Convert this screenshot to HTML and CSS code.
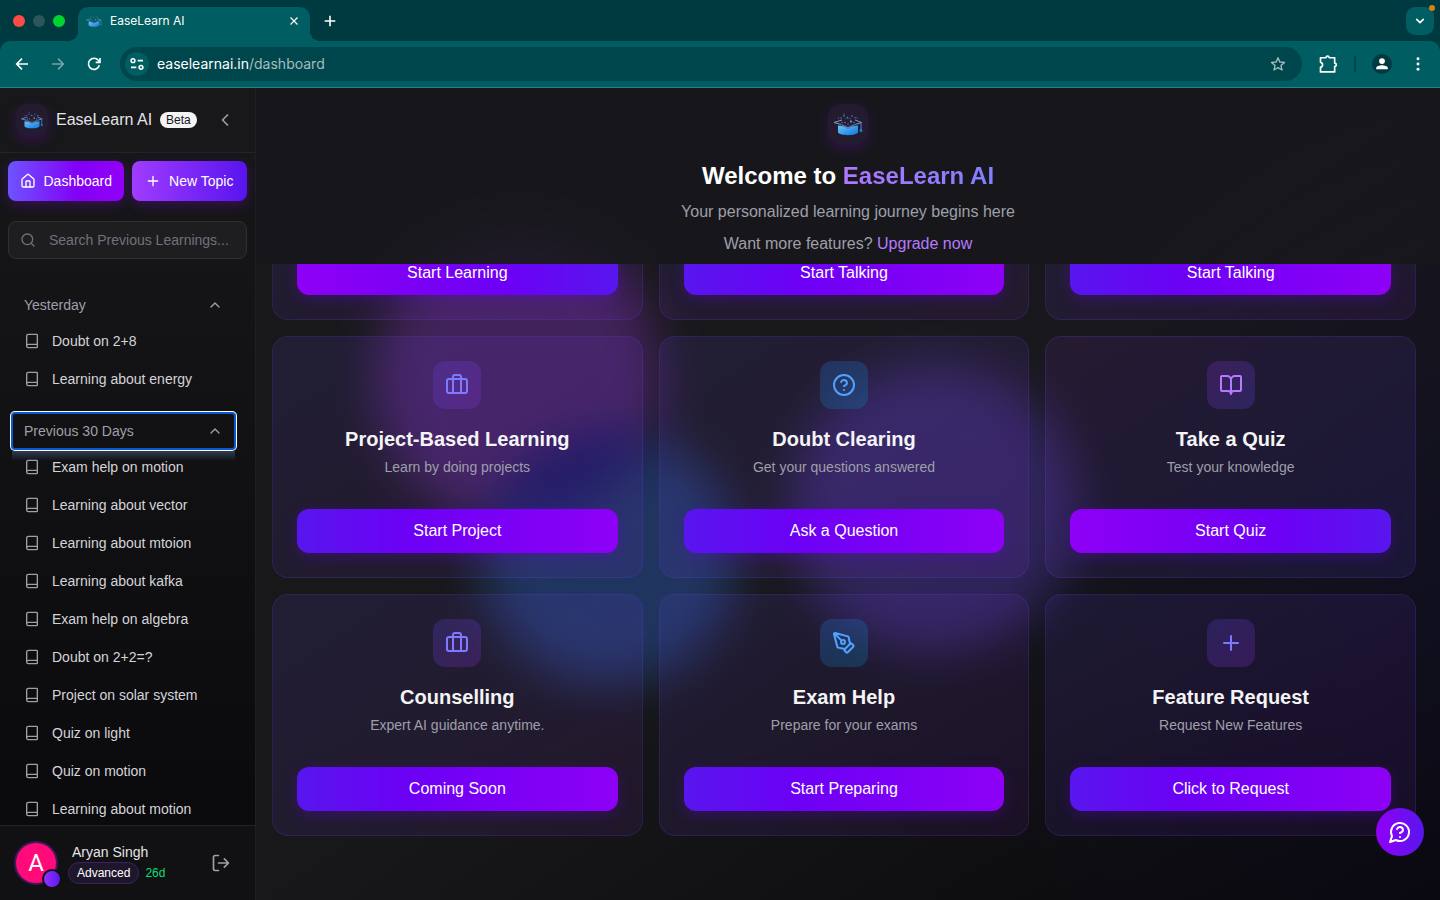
FILE: index.html
```html
<!DOCTYPE html>
<html lang="en">
<head>
  <meta charset="UTF-8" />
  <meta name="viewport" content="width=device-width, initial-scale=1.0"/>
  <title>EaseLearn AI</title>
  <link rel="stylesheet" href="styles.css">
</head>
<body>

<svg class="sprite" aria-hidden="true">
  <defs>
    <linearGradient id="capFill" x1="0" y1="0" x2="1" y2="1">
      <stop offset="0" stop-color="#6cc4ff"/>
      <stop offset="1" stop-color="#0b76d8"/>
    </linearGradient>
  </defs>
  <symbol id="logo" viewBox="0 0 30 24">
    <path d="M5 13.500c3 0 7 1 10 3 3-2 7-3 10-3v7c-2 3.500-18 3.500-20 0z" fill="url(#capFill)"/>
    <path d="M9 8 1 10.500l7 2 7 3.500 7-3.500 6.500-2L22 8" fill="none" stroke="#7f9fd0" stroke-width="1"/>
    <path d="M6 11.500 15 14.500l9-3M12 7q3-2 6 0" fill="none" stroke="#3d4f80" stroke-width=".8"/>
    <path d="M28 10.500v6" stroke="#3f8fe0" stroke-width="1"/>
    <path d="M27.200 16.500h1.600l.7 3.300h-3z" fill="#1d86e0"/>
    <g fill="#6485bb">
      <circle cx="11" cy="4" r=".8"/><circle cx="18" cy="9.500" r="1.200"/><circle cx="19" cy="4" r=".8"/>
      <circle cx="8" cy="6" r=".7"/><circle cx="14.500" cy="5.500" r=".7"/><circle cx="22" cy="5.800" r=".7"/>
      <circle cx="12" cy="10.500" r=".8"/><circle cx="11" cy="2" r=".6"/><circle cx="5.500" cy="6" r=".6"/>
      <circle cx="21" cy="10.500" r=".7"/><circle cx="9" cy="10.500" r=".7"/><circle cx="24" cy="6" r=".6"/>
      <circle cx="15" cy="12" r=".7"/>
    </g>
  </symbol>
  <symbol id="briefcase" viewBox="0 0 24 24"><path d="M16 20V4a2 2 0 0 0-2-2h-4a2 2 0 0 0-2 2v16"/><rect width="20" height="14" x="2" y="6" rx="2"/></symbol>
  <symbol id="help" viewBox="0 0 24 24"><circle cx="12" cy="12" r="10"/><path d="M9.090 9a3 3 0 0 1 5.830 1c0 2-3 3-3 3M12 17h.01"/></symbol>
  <symbol id="book-open" viewBox="0 0 24 24"><path d="M12 7v14M3 18a1 1 0 0 1-1-1V4a1 1 0 0 1 1-1h5a4 4 0 0 1 4 4 4 4 0 0 1 4-4h5a1 1 0 0 1 1 1v13a1 1 0 0 1-1 1h-6a3 3 0 0 0-3 3 3 3 0 0 0-3-3z"/></symbol>
  <symbol id="pen" viewBox="0 0 24 24"><path d="M15.707 21.293a1 1 0 0 1-1.414 0l-1.586-1.586a1 1 0 0 1 0-1.414l5.586-5.586a1 1 0 0 1 1.414 0l1.586 1.586a1 1 0 0 1 0 1.414z"/><path d="m18 13-1.375-6.874a1 1 0 0 0-.746-.776L3.235 2.028a1 1 0 0 0-1.207 1.207L5.350 15.879a1 1 0 0 0 .776.746L13 18M2.300 2.300l7.286 7.286"/><circle cx="11" cy="11" r="2"/></symbol>
  <symbol id="plus" viewBox="0 0 24 24"><path d="M5 12h14M12 5v14"/></symbol>
  <symbol id="book" viewBox="0 0 24 24"><path d="M4 19.500v-15A2.500 2.500 0 0 1 6.500 2H19a1 1 0 0 1 1 1v18a1 1 0 0 1-1 1H6.500a1 1 0 0 1 0-5H20"/></symbol>
  <symbol id="house" viewBox="0 0 24 24"><path d="M15 21v-8a1 1 0 0 0-1-1h-4a1 1 0 0 0-1 1v8"/><path d="M3 10a2 2 0 0 1 .709-1.528l7-5.999a2 2 0 0 1 2.582 0l7 5.999A2 2 0 0 1 21 10v9a2 2 0 0 1-2 2H5a2 2 0 0 1-2-2z"/></symbol>
  <symbol id="search" viewBox="0 0 24 24"><circle cx="11" cy="11" r="8"/><path d="m21 21-4.300-4.300"/></symbol>
  <symbol id="chevron-up" viewBox="0 0 24 24"><path d="m18 15-6-6-6 6"/></symbol>
  <symbol id="chevron-left" viewBox="0 0 24 24"><path d="m15 18-6-6 6-6"/></symbol>
  <symbol id="chevron-down" viewBox="0 0 24 24"><path d="m4 8 8 8 8-8"/></symbol>
  <symbol id="logout" viewBox="0 0 24 24"><path d="M9 21H5a2 2 0 0 1-2-2V5a2 2 0 0 1 2-2h4M16 17l5-5-5-5M21 12H9"/></symbol>
  <symbol id="chat" viewBox="0 0 24 24"><path d="M7.900 20A9 9 0 1 0 4 16.100L2 22ZM9.090 9a3 3 0 0 1 5.830 1c0 2-3 3-3 3M12 17h.01"/></symbol>
  <symbol id="close" viewBox="0 0 24 24"><path d="M5 5l14 14M19 5 5 19"/></symbol>
  <symbol id="new" viewBox="0 0 24 24"><path d="M4 12h16M12 4v16"/></symbol>
  <symbol id="arrow-left" viewBox="0 0 24 24"><path d="M21 12H4M12 4l-8 8 8 8"/></symbol>
  <symbol id="arrow-right" viewBox="0 0 24 24"><path d="M3 12h17M12 4l8 8-8 8"/></symbol>
  <symbol id="reload" viewBox="0 0 24 24"><path d="M20 14a8.300 8.300 0 1 1-1.500-7.500L21 9M21 3v6.500h-6.500"/></symbol>
  <symbol id="tune" viewBox="0 0 24 24"><circle cx="6" cy="7" r="2.800"/><path d="M13 7h8M3 17h8"/><circle cx="18" cy="17" r="2.800"/></symbol>
  <symbol id="star" viewBox="0 0 24 24"><path d="m12 2.500 2.700 6.500 7 .6-5.300 4.600 1.600 6.800-6-3.600L6 21l1.600-6.800L2.300 9.600l7-.6z"/></symbol>
  <symbol id="puzzle" viewBox="0 0 24 24"><path d="M3 4.500h6.500q.3-2 2-2t2 2H20v6.500q2 .3 2 2t-2 2v6.500H3v-5.500q2.500-.5 2.500-3t-2.500-3z"/></symbol>
  <symbol id="person" viewBox="0 0 24 24"><circle cx="12" cy="7" r="5"/><path d="M2 21v-2c0-3.500 6-5 10-5s10 1.500 10 5v2z"/></symbol>
  <symbol id="dots" viewBox="0 0 24 24"><circle cx="12" cy="4" r="2.200"/><circle cx="12" cy="12" r="2.200"/><circle cx="12" cy="20" r="2.200"/></symbol>
</svg>

<header class="browser">
  <div class="tab-strip">
    <div class="lights"><span class="light red"></span><span class="light gray"></span><span class="light green"></span></div>
    <div class="tab">
      <svg class="tab-logo"><use href="#logo"/></svg>
      <span class="tab-title">EaseLearn AI</span>
      <button class="plain" aria-label="Close tab"><svg class="icon s12 bold"><use href="#close"/></svg></button>
    </div>
    <button class="plain new-tab" aria-label="New tab"><svg class="icon s16 bold"><use href="#new"/></svg></button>
    <button class="tab-search" aria-label="Search tabs"><svg class="icon s10"><use href="#chevron-down"/></svg></button>
  </div>
  <div class="toolbar">
    <div class="nav-buttons">
      <button class="plain" aria-label="Back"><svg class="icon s16 bold"><use href="#arrow-left"/></svg></button>
      <button class="plain dim" aria-label="Forward"><svg class="icon s16 bold"><use href="#arrow-right"/></svg></button>
      <button class="plain" aria-label="Reload"><svg class="icon s16 bold"><use href="#reload"/></svg></button>
    </div>
    <div class="omnibox">
      <span class="site-info"><svg class="icon s16 bold"><use href="#tune"/></svg></span>
      <span class="url">easelearnai.in<span class="path">/dashboard</span></span>
      <button class="plain star" aria-label="Bookmark"><svg class="icon s16"><use href="#star"/></svg></button>
    </div>
    <div class="tools">
      <button class="plain" aria-label="Extensions"><svg class="icon s20"><use href="#puzzle"/></svg></button>
      <span class="tool-line"></span>
      <button class="profile" aria-label="Profile"><svg class="icon s16 solid"><use href="#person"/></svg></button>
      <button class="plain" aria-label="Menu"><svg class="icon s16 solid"><use href="#dots"/></svg></button>
    </div>
  </div>
</header>

<div class="app">
  <aside class="sidebar">
    <div class="brand">
      <span class="brand-logo"><svg><use href="#logo"/></svg></span>
      <span class="brand-name">EaseLearn AI</span>
      <span class="beta">Beta</span>
      <button class="plain collapse" aria-label="Collapse sidebar"><svg class="icon s20"><use href="#chevron-left"/></svg></button>
    </div>
    <div class="actions">
      <button class="action dashboard"><svg class="icon s16"><use href="#house"/></svg>Dashboard</button>
      <button class="action new-topic"><svg class="icon s16"><use href="#plus"/></svg>New Topic</button>
    </div>
    <label class="search">
      <svg class="icon s16"><use href="#search"/></svg>
      <input type="text" placeholder="Search Previous Learnings..." aria-label="Search Previous Learnings">
    </label>
    <nav class="history">
      <section class="group">
        <button class="group-title">Yesterday<svg class="icon s16"><use href="#chevron-up"/></svg></button>
        <ul>
          <li><a href="#"><svg class="icon s16"><use href="#book"/></svg>Doubt on 2+8</a></li>
          <li><a href="#"><svg class="icon s16"><use href="#book"/></svg>Learning about energy</a></li>
        </ul>
      </section>
      <section class="group">
        <button class="group-title focused">Previous 30 Days<svg class="icon s16"><use href="#chevron-up"/></svg></button>
        <ul>
          <li><a href="#"><svg class="icon s16"><use href="#book"/></svg>Exam help on motion</a></li>
          <li><a href="#"><svg class="icon s16"><use href="#book"/></svg>Learning about vector</a></li>
          <li><a href="#"><svg class="icon s16"><use href="#book"/></svg>Learning about mtoion</a></li>
          <li><a href="#"><svg class="icon s16"><use href="#book"/></svg>Learning about kafka</a></li>
          <li><a href="#"><svg class="icon s16"><use href="#book"/></svg>Exam help on algebra</a></li>
          <li><a href="#"><svg class="icon s16"><use href="#book"/></svg>Doubt on 2+2=?</a></li>
          <li><a href="#"><svg class="icon s16"><use href="#book"/></svg>Project on solar system</a></li>
          <li><a href="#"><svg class="icon s16"><use href="#book"/></svg>Quiz on light</a></li>
          <li><a href="#"><svg class="icon s16"><use href="#book"/></svg>Quiz on motion</a></li>
          <li><a href="#"><svg class="icon s16"><use href="#book"/></svg>Learning about motion</a></li>
        </ul>
      </section>
    </nav>
    <div class="user">
      <span class="avatar">A<span class="avatar-dot"></span></span>
      <div class="user-info">
        <div class="user-name">Aryan Singh</div>
        <div class="plan-row"><span class="plan">Advanced</span><span class="days">26d</span></div>
      </div>
      <button class="plain logout" aria-label="Log out"><svg class="icon s20"><use href="#logout"/></svg></button>
    </div>
  </aside>

  <main class="main">
    <div class="blobs">
      <span class="blob purple"></span>
      <span class="blob indigo"></span>
      <span class="blob blue"></span>
    </div>
    <div class="welcome">
      <span class="welcome-logo"><svg><use href="#logo"/></svg></span>
      <h1>Welcome to <span class="grad-text">EaseLearn AI</span></h1>
      <p>Your personalized learning journey begins here</p>
      <p>Want more features? <a href="#">Upgrade now</a></p>
    </div>
    <div class="scroller">
      <div class="cards">
        <article class="card">
          <button class="cta reverse">Start Learning</button>
        </article>
        <article class="card">
          <button class="cta">Start Talking</button>
        </article>
        <article class="card">
          <button class="cta">Start Talking</button>
        </article>
        <article class="card">
          <span class="card-icon indigo"><svg class="icon s24"><use href="#briefcase"/></svg></span>
          <h2>Project-Based Learning</h2>
          <p>Learn by doing projects</p>
          <button class="cta">Start Project</button>
        </article>
        <article class="card">
          <span class="card-icon blue"><svg class="icon s24"><use href="#help"/></svg></span>
          <h2>Doubt Clearing</h2>
          <p>Get your questions answered</p>
          <button class="cta">Ask a Question</button>
        </article>
        <article class="card alt">
          <span class="card-icon violet"><svg class="icon s24"><use href="#book-open"/></svg></span>
          <h2>Take a Quiz</h2>
          <p>Test your knowledge</p>
          <button class="cta reverse">Start Quiz</button>
        </article>
        <article class="card">
          <span class="card-icon indigo"><svg class="icon s24"><use href="#briefcase"/></svg></span>
          <h2>Counselling</h2>
          <p>Expert AI guidance anytime.</p>
          <button class="cta">Coming Soon</button>
        </article>
        <article class="card">
          <span class="card-icon blue"><svg class="icon s24"><use href="#pen"/></svg></span>
          <h2>Exam Help</h2>
          <p>Prepare for your exams</p>
          <button class="cta">Start Preparing</button>
        </article>
        <article class="card">
          <span class="card-icon indigo"><svg class="icon s24"><use href="#plus"/></svg></span>
          <h2>Feature Request</h2>
          <p>Request New Features</p>
          <button class="cta">Click to Request</button>
        </article>
      </div>
    </div>
  </main>
</div>

<button class="fab" aria-label="Support"><svg class="icon s24"><use href="#chat"/></svg></button>

</body>
</html>
```

FILE: styles.css
```css
* { box-sizing: border-box; }
body {
  margin: 0;
  height: 100vh;
  display: flex;
  flex-direction: column;
  overflow: hidden;
  background: #18181b;
  color: #f4f4f5;
  font-family: "Liberation Sans", Arial, sans-serif;
  font-size: 14px;
  line-height: 20px;
}
h1, h2, p, ul { margin: 0; padding: 0; }
ul { list-style: none; }
a { text-decoration: none; color: inherit; }
button {
  font: inherit;
  color: inherit;
  border: none;
  padding: 0;
  cursor: pointer;
}
.plain { background: none; display: flex; }
.sprite { position: absolute; width: 0; height: 0; }
.icon {
  fill: none;
  stroke: currentColor;
  stroke-width: 2;
  stroke-linecap: round;
  stroke-linejoin: round;
  flex-shrink: 0;
  display: block;
}
.icon.bold { stroke-width: 2.4; stroke-linecap: butt; stroke-linejoin: miter; }
.icon.solid { fill: currentColor; stroke: none; }
.s10 { width: 10px; height: 10px; stroke-width: 4; }
.s12 { width: 12px; height: 12px; }
.s16 { width: 16px; height: 16px; }
.s20 { width: 20px; height: 20px; }
.s24 { width: 24px; height: 24px; }

/* browser bar */
.browser {
  background: #003a41;
  color: #fff;
  font-family: Inter, Roboto, sans-serif;
  flex-shrink: 0;
}
.tab-strip {
  height: 41px;
  display: flex;
  align-items: center;
  padding: 0 6px 0 13px;
}
.lights { display: flex; gap: 8px; width: 65px; }
.light { width: 12px; height: 12px; border-radius: 50%; }
.light.red { background: #ff4b45; }
.light.gray { background: #2a565c; }
.light.green { background: #00d42f; }
.tab {
  align-self: flex-end;
  width: 232px;
  height: 34px;
  display: flex;
  align-items: center;
  padding: 0 10px 6px 8px;
  background: #005d61;
  border-radius: 10px 10px 0 0;
  position: relative;
}
.tab::before, .tab::after {
  content: "";
  position: absolute;
  bottom: 0;
  width: 10px;
  height: 10px;
}
.tab::before { right: 100%; background: radial-gradient(circle at 0 0, transparent 10px, #005d61 10px); }
.tab::after { left: 100%; background: radial-gradient(circle at 100% 0, transparent 10px, #005d61 10px); }
.tab-logo { width: 16px; height: 16px; }
.tab-title { flex: 1; margin-left: 8px; font-size: 12px; }
.new-tab { margin-left: 12px; }
.tab-search {
  margin-left: auto;
  width: 28px;
  height: 28px;
  border-radius: 9px;
  background: #005d61;
  display: flex;
  align-items: center;
  justify-content: center;
  position: relative;
}
.tab-search::after {
  content: "";
  position: absolute;
  top: -2px;
  right: -1px;
  width: 6px;
  height: 6px;
  border-radius: 50%;
  background: #d9820f;
}
.toolbar {
  height: 47px;
  background: #005d61;
  border-bottom: 1px solid #2a8084;
  border-radius: 10px 10px 0 0;
  display: flex;
  align-items: center;
  padding: 0 14px;
}
.nav-buttons { display: flex; gap: 20px; }
.dim { opacity: .45; }
.omnibox {
  flex: 1;
  height: 34px;
  margin: 0 16px 0 18px;
  padding: 0 16px 0 5px;
  border-radius: 17px;
  background: #00474d;
  display: flex;
  align-items: center;
}
.site-info {
  width: 24px;
  height: 24px;
  border-radius: 50%;
  background: #005d61;
  display: flex;
  align-items: center;
  justify-content: center;
}
.url { flex: 1; margin-left: 8px; font-size: 14px; }
.path, .star { color: #a3bdbf; }
.tools { display: flex; align-items: center; gap: 16px; }
.tool-line { width: 2px; height: 16px; background: #00474d; }
.profile {
  width: 20px;
  height: 20px;
  border-radius: 50%;
  background: #003a41;
  display: flex;
  align-items: center;
  justify-content: center;
}
.profile .icon { width: 14px; height: 14px; }
.tools > :last-child { margin-left: 2px; }

.app { flex: 1; min-height: 0; display: flex; }

/* sidebar */
.sidebar {
  width: 256px;
  flex-shrink: 0;
  display: flex;
  flex-direction: column;
  border-right: 1px solid #1f1f23;
  background: linear-gradient(to bottom, #18181b, #09090b);
}
.brand {
  height: 65px;
  flex-shrink: 0;
  display: flex;
  align-items: center;
  gap: 8px;
  padding: 0 20px 0 16px;
  border-bottom: 1px solid #242428;
  background: #18181b;
}
.brand-logo, .welcome-logo {
  display: flex;
  align-items: center;
  justify-content: center;
  background: #231b30;
  box-shadow: 0 4px 12px rgba(130, 0, 219, .25);
}
.brand-logo { width: 32px; height: 32px; border-radius: 10px; }
.brand-logo svg { width: 24px; height: 18px; }
.brand-name { font-size: 16px; white-space: nowrap; color: #e4e4e7; }
.beta {
  padding: 0 6px;
  border-radius: 8px;
  background: #f4f4f5;
  color: #18181b;
  font-size: 12px;
  line-height: 16px;
}
.collapse { margin-left: auto; color: #9f9fa9; }
.actions {
  display: grid;
  grid-template-columns: 1fr 1fr;
  gap: 8px;
  padding: 8px;
}
.action {
  height: 40px;
  display: flex;
  align-items: center;
  justify-content: center;
  gap: 8px;
  border-radius: 8px;
  color: #fff;
  box-shadow: 0 4px 12px rgba(130, 0, 219, .3);
}
.dashboard { background: linear-gradient(to right, #6e54ff, #8200f5 60%, #9200f8); }
.new-topic { background: linear-gradient(to right, #a03cff, #5814ee); }
.search {
  height: 38px;
  flex-shrink: 0;
  margin: 12px 8px 0;
  padding: 0 11px;
  display: flex;
  align-items: center;
  gap: 13px;
  border: 1px solid #303034;
  border-radius: 8px;
  background: #1e1e21;
  color: #71717b;
}
.search input {
  flex: 1;
  min-width: 0;
  padding: 0;
  border: none;
  outline: none;
  background: none;
  font: inherit;
  color: #f4f4f5;
}
.search input::placeholder { color: #71717b; opacity: 1; }
.history {
  flex: 1;
  min-height: 0;
  overflow: hidden;
  margin-top: 16px;
  padding: 12px 20px 0 12px;
}
.group { margin-bottom: 16px; }
.group-title {
  width: 100%;
  height: 36px;
  padding: 0 12px;
  display: flex;
  align-items: center;
  justify-content: space-between;
  background: none;
  color: #9f9fa9;
}
.focused {
  border-radius: 3px;
  position: relative;
  box-shadow: inset 0 0 0 1px #0b57d0, 0 0 0 1px #0b57d0, 0 0 0 2px #fff;
}
.focused::after {
  content: "";
  position: absolute;
  top: calc(100% + 2px);
  left: 0;
  right: 0;
  height: 10px;
  background: linear-gradient(to bottom, rgba(90, 120, 180, .4), transparent);
}
.group ul { display: flex; flex-direction: column; gap: 2px; }
.group a {
  height: 36px;
  padding: 0 12px;
  display: flex;
  align-items: center;
  gap: 12px;
  color: #d4d4d8;
}
.group a .icon { color: #9f9fa9; }
.user {
  height: 75px;
  flex-shrink: 0;
  display: flex;
  align-items: center;
  gap: 12px;
  padding: 0 24px 0 16px;
  border-top: 1px solid #242428;
  background: #111113;
}
.avatar {
  width: 40px;
  height: 40px;
  border-radius: 50%;
  background: #ff0a78;
  box-shadow: 0 0 0 2px #3c1a5c;
  color: #fff;
  font-family: Roboto, sans-serif;
  font-size: 24px;
  line-height: 40px;
  text-align: center;
  position: relative;
}
.avatar-dot {
  position: absolute;
  right: -6px;
  bottom: -6px;
  width: 20px;
  height: 20px;
  border: 2px solid #111113;
  border-radius: 50%;
  background: linear-gradient(to right, #9333ff, #5b18f0);
}
.user-name { padding-left: 4px; color: #e4e4e7; }
.plan-row { display: flex; align-items: center; gap: 6px; font-size: 12px; }
.plan {
  padding: 0 8px;
  border: 1px solid #3b2160;
  border-radius: 11px;
  background: #1e162b;
  color: #fff;
}
.days { color: #05df72; }
.logout { margin-left: auto; color: #9f9fa9; }

/* main area */
.main {
  flex: 1;
  min-width: 0;
  display: flex;
  flex-direction: column;
  position: relative;
  overflow: hidden;
  background:
    radial-gradient(circle at 105% 60%, rgba(30, 20, 110, .16), transparent 45%),
    linear-gradient(to bottom right, #18181b 50%, #08080a);
}
.blobs { position: absolute; inset: 0; opacity: .3; }
.blob {
  position: absolute;
  width: 288px;
  height: 288px;
  border-radius: 50%;
  filter: blur(24px);
  mix-blend-mode: multiply;
}
.blob.purple { left: 10%; top: 18%; background: #a13cf0; }
.blob.indigo { left: 45%; top: 34%; background: #6a48ee; }
.blob.blue { left: 19%; top: 42%; width: 256px; height: 256px; background: #3377ff; }
.welcome {
  position: relative;
  display: flex;
  flex-direction: column;
  align-items: center;
  padding: 16px 0 8px;
  background: rgba(24, 24, 27, .8);
}
.welcome-logo { width: 40px; height: 40px; border-radius: 14px; margin-bottom: 16px; }
.welcome-logo svg { width: 30px; height: 24px; }
.welcome h1 { font-size: 24px; line-height: 32px; color: #fff; }
.grad-text {
  background: linear-gradient(to right, #b076ff, #8080ff);
  -webkit-background-clip: text;
  background-clip: text;
  color: transparent;
}
.welcome p { margin-top: 8px; font-size: 16px; line-height: 24px; color: #9f9fa9; }
.welcome a { color: #b57aff; }

/* column-reverse keeps the view at the end of the list */
.scroller {
  flex: 1;
  min-height: 0;
  position: relative;
  display: flex;
  flex-direction: column-reverse;
  overflow-y: auto;
  scrollbar-width: none;
}
.cards {
  display: grid;
  grid-template-columns: repeat(3, 1fr);
  gap: 16px;
  padding: 16px 24px 64px 16px;
}
.card {
  display: flex;
  flex-direction: column;
  align-items: center;
  padding: 24px;
  border: 1px solid rgba(110, 70, 255, .16);
  border-radius: 16px;
  background: linear-gradient(to bottom right, rgba(110, 80, 255, .11), rgba(173, 50, 255, .08));
}
.card.alt {
  border-color: rgba(150, 70, 255, .16);
  background: linear-gradient(to bottom right, rgba(173, 70, 255, .09), rgba(97, 80, 255, .11));
}
.card-icon {
  width: 48px;
  height: 48px;
  border-radius: 12px;
  display: flex;
  align-items: center;
  justify-content: center;
}
.card-icon.indigo { color: #7c7aff; background: linear-gradient(to bottom right, rgba(97, 75, 246, .22), rgba(150, 50, 230, .22)); }
.card-icon.blue { color: #51a2ff; background: linear-gradient(to bottom right, rgba(43, 127, 255, .22), rgba(0, 150, 190, .24)); }
.card-icon.violet { color: #b57aff; background: linear-gradient(to bottom right, rgba(150, 50, 230, .22), rgba(97, 75, 246, .22)); }
.card h2 { margin-top: 16px; font-size: 20px; line-height: 28px; color: #f4f4f5; }
.card p { margin-top: 4px; color: #9f9fa9; }
.cta {
  width: 100%;
  height: 44px;
  margin-top: 32px;
  border-radius: 12px;
  font-size: 16px;
  color: #fff;
  background: linear-gradient(to right, #5816ee, #6c00f5 35%, #8e00f6);
  box-shadow: 0 4px 14px rgba(100, 0, 219, .3);
}
.cta.reverse { background: linear-gradient(to left, #5816ee, #6c00f5 35%, #8e00f6); }

.fab {
  position: fixed;
  right: 16px;
  bottom: 44px;
  width: 48px;
  height: 48px;
  border-radius: 50%;
  display: flex;
  align-items: center;
  justify-content: center;
  color: #fff;
  background: linear-gradient(to right, #9200f8, #5816ee);
}
```
